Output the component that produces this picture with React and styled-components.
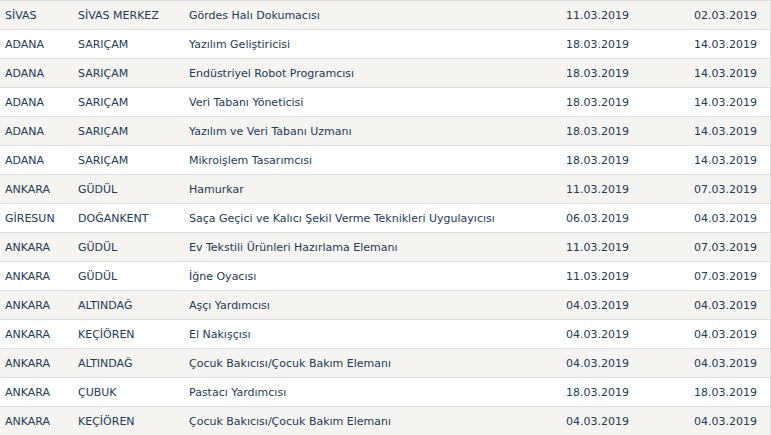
import styled, { createGlobalStyle } from "styled-components";

const GlobalStyle = createGlobalStyle`
  html, body {
    margin: 0;
    padding: 0;
    background: #fff;
  }
`

const Table = styled.div`
  width: 771px;
  box-sizing: border-box;
  font-family: "DejaVu Sans", Verdana, sans-serif;
  font-size: 11px;
  color: #233a58;
  border-right: 1px solid #dddddd;
  border-top: 1px solid #dddddd;
`

const Row = styled.div`
  display: grid;
  grid-template-columns: 73px 111px 318px 140px 128px;
  align-items: center;
  height: 28px;
  background-color: ${p => (p.$striped ? "#f5f4f0" : "#fff")};
  border-bottom: 1px solid #dddddd;
`

const Cell = styled.div`
  padding: ${p => (p.$right ? "0 13px 0 0" : "0 0 0 5px")};
  text-align: ${p => (p.$right ? "right" : "left")};
  white-space: nowrap;
`

const rows = [
  ["SİVAS", "SİVAS MERKEZ", "Gördes Halı Dokumacısı", "11.03.2019", "02.03.2019"],
  ["ADANA", "SARIÇAM", "Yazılım Geliştiricisi", "18.03.2019", "14.03.2019"],
  ["ADANA", "SARIÇAM", "Endüstriyel Robot Programcısı", "18.03.2019", "14.03.2019"],
  ["ADANA", "SARIÇAM", "Veri Tabanı Yöneticisi", "18.03.2019", "14.03.2019"],
  ["ADANA", "SARIÇAM", "Yazılım ve Veri Tabanı Uzmanı", "18.03.2019", "14.03.2019"],
  ["ADANA", "SARIÇAM", "Mikroişlem Tasarımcısı", "18.03.2019", "14.03.2019"],
  ["ANKARA", "GÜDÜL", "Hamurkar", "11.03.2019", "07.03.2019"],
  ["GİRESUN", "DOĞANKENT", "Saça Geçici ve Kalıcı Şekil Verme Teknikleri Uygulayıcısı", "06.03.2019", "04.03.2019"],
  ["ANKARA", "GÜDÜL", "Ev Tekstili Ürünleri Hazırlama Elemanı", "11.03.2019", "07.03.2019"],
  ["ANKARA", "GÜDÜL", "İğne Oyacısı", "11.03.2019", "07.03.2019"],
  ["ANKARA", "ALTINDAĞ", "Aşçı Yardımcısı", "04.03.2019", "04.03.2019"],
  ["ANKARA", "KEÇİÖREN", "El Nakışçısı", "04.03.2019", "04.03.2019"],
  ["ANKARA", "ALTINDAĞ", "Çocuk Bakıcısı/Çocuk Bakım Elemanı", "04.03.2019", "04.03.2019"],
  ["ANKARA", "ÇUBUK", "Pastacı Yardımcısı", "18.03.2019", "18.03.2019"],
  ["ANKARA", "KEÇİÖREN", "Çocuk Bakıcısı/Çocuk Bakım Elemanı", "04.03.2019", "04.03.2019"],
];

const App = () => {
  return (
    <>
      <GlobalStyle />
      <Table>
        {rows.map((r, i) => (
          <Row key={i} $striped={i % 2 === 0}>
            <Cell>{r[0]}</Cell>
            <Cell>{r[1]}</Cell>
            <Cell>{r[2]}</Cell>
            <Cell $right>{r[3]}</Cell>
            <Cell $right>{r[4]}</Cell>
          </Row>
        ))}
      </Table>
    </>
  )
}

export default App;
